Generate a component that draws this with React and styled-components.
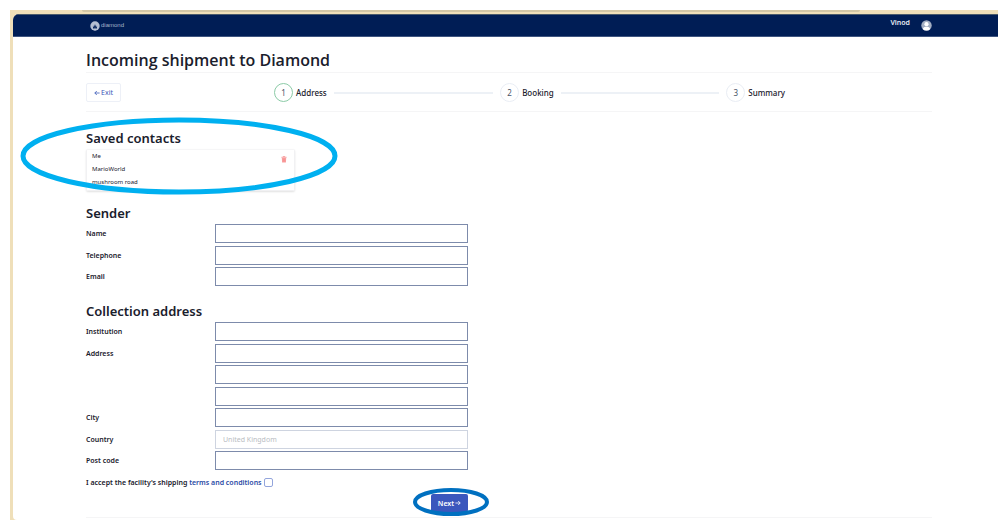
import React from "react";
import styled, { createGlobalStyle } from "styled-components";

const GlobalStyle = createGlobalStyle`
  * { box-sizing: border-box; }
  body {
    margin: 0;
    padding: 10px 7px 11px 10px;
    background: #fff;
    color: #1a202c;
    font-family: "Noto Sans", "Open Sans", sans-serif;
    font-size: 7px;
    line-height: 13px;
  }
  button, input { font: inherit; }
`;

const Desktop = styled.div`
  background: #efdfb9;
  padding: 0 0 0 3px;
`;

const BackdropEdge = styled.div`
  height: 2px;
  margin: 0 138px 2px 69px;
  background: #d3c7a6;
  border-radius: 0 0 2px 2px;
`;

const Window = styled.div`
  background: #fff;
  border-radius: 6px 0 0 4px;
  overflow: hidden;
`;

const TopBar = styled.header`
  display: flex;
  align-items: center;
  height: 23px;
  padding: 0 66px 0 77px;
  background: #001d55;
  border-top: 1px solid #4b5b6c;
  border-bottom: 1px solid #3f5580;
`;

const Brand = styled.a`
  display: flex;
  align-items: center;
  gap: 1px;
  margin-right: auto;
  color: #a9b4cb;
  font-family: "Liberation Sans", Arial, sans-serif;
  font-size: 6px;
  text-decoration: none;
`;

const User = styled.span`
  align-self: flex-start;
  line-height: 15px;
  font-weight: 600;
  color: #e8ecf4;
`;

const Avatar = styled.svg`
  display: block;
  width: 11px;
  height: 11px;
  margin-left: 11px;
`;

const Page = styled.main`
  margin: 0 66px 0 73px;
  padding: 12px 0 2px;
`;

const Title = styled.h1`
  margin: 0;
  padding-bottom: 1px;
  border-bottom: 1px solid #f5f5f6;
  font-family: "Open Sans", "Noto Sans", sans-serif;
  font-size: 16px;
  line-height: 22px;
  font-weight: 600;
`;

const Progress = styled.nav`
  display: flex;
  align-items: center;
  padding: 10px 0 9px;
  border-bottom: 1px solid #f5f5f6;
`;

const ExitButton = styled.button`
  display: flex;
  align-items: center;
  justify-content: center;
  gap: 1px;
  width: 35px;
  height: 19px;
  padding: 0;
  border: 1px solid #edf0f7;
  border-radius: 2px;
  background: #fff;
  color: #3b58b8;
`;

const Steps = styled.ol`
  flex: 1;
  display: flex;
  gap: 7px;
  margin: 0 147px 0 153px;
  padding: 0;
  list-style: none;
`;

const Step = styled.li`
  flex: ${(p) => (p.$last ? "0 0 57px" : "1")};
  display: flex;
  align-items: center;
  gap: 3px;
  font-size: 8px;
  font-weight: 500;
`;

const StepNumber = styled.span`
  display: grid;
  place-items: center;
  flex: none;
  width: 19px;
  height: 19px;
  border: 1px solid ${(p) => (p.$active ? "#8ccba7" : "#e9edf4")};
  border-radius: 50%;
  font-weight: 400;
  color: #4a5568;
`;

const StepLine = styled.span`
  flex: 1;
  height: 2px;
  margin-left: 4px;
  background: #edf1f6;
`;

const Section = styled.section`
  position: relative;
  margin-top: ${(p) => p.$space}px;
`;

const Heading = styled.h2`
  margin: 0 0 2px;
  font-size: 13px;
  line-height: 18px;
  font-weight: 600;
`;

const ContactCard = styled.div`
  display: flex;
  justify-content: space-between;
  align-items: flex-start;
  width: 209px;
  height: 42px;
  padding: 0 7px 0 5px;
  border: 1px solid #f1f1f3;
  border-top-color: #f6f6f7;
  border-radius: 2px;
  box-shadow: 0 1px 2px #0000001f;
  font-size: 6px;
  p { margin: 0; }
`;

const DeleteButton = styled.button`
  margin-top: 6px;
  padding: 0;
  border: 0;
  background: none;
  svg { display: block; }
`;

const Fields = styled.div`
  display: grid;
  align-content: space-between;
  width: 382px;
  min-height: ${(p) => p.$height}px;
`;

const FieldRow = styled.div`
  display: grid;
  grid-template-columns: 129px 1fr;
  align-items: center;
  label { font-weight: 600; }
`;

const TextInput = styled.input`
  grid-column: 2;
  width: 100%;
  height: 19px;
  padding: 0 7px;
  border: 1px solid #7d8bab;
  border-radius: 0;
  background: #fff;
  color: #1a202c;
  &:disabled { border-color: #ced4e0; color: #b9bcc2; }
`;

const Terms = styled.div`
  display: flex;
  align-items: center;
  gap: 2px;
  height: 11px;
  margin-top: 7px;
  font-weight: 600;
  a { color: #2a4ba5; text-decoration: none; }
`;

const Checkbox = styled.input`
  appearance: none;
  width: 9px;
  height: 9px;
  margin: 0;
  border: 1px solid #93a5dc;
  border-radius: 2px;
  background: #fff;
`;

const Actions = styled.div`
  display: flex;
  justify-content: flex-end;
  width: 382px;
  margin-top: 6px;
`;

const NextWrap = styled.div`
  position: relative;
`;

const NextButton = styled.button`
  display: flex;
  align-items: center;
  justify-content: center;
  gap: 1px;
  width: 37px;
  height: 18px;
  padding: 0;
  border: 0;
  border-radius: 2px;
  background: #3b57bd;
  color: #fff;
  font-weight: 600;
`;

const Divider = styled.hr`
  margin: 5px 0 0;
  border: 0;
  border-top: 1px solid #f5f5f6;
`;

const Ring = styled.svg`
  position: absolute;
  left: ${(p) => p.$left}px;
  top: ${(p) => p.$top}px;
  pointer-events: none;
  overflow: visible;
`;

function Arrow({ back }) {
  return (
    <svg width="6" height="6" viewBox="0 0 6 6" fill="none" stroke="currentColor" strokeWidth="0.8" aria-hidden="true">
      <path d={back ? "M5.6 3H0.8M2.8 1L0.8 3l2 2" : "M0.4 3h4.8M3.2 1l2 2-2 2"} />
    </svg>
  );
}

function Field({ label, id, ...rest }) {
  return (
    <FieldRow>
      {label && <label htmlFor={id}>{label}</label>}
      <TextInput id={id} {...rest} />
    </FieldRow>
  );
}

const steps = ["Address", "Booking", "Summary"];

export default function App() {
  return (
    <>
      <GlobalStyle />
      <Desktop>
        <BackdropEdge />
        <Window>
          <TopBar>
            <Brand href="#">
              <svg width="10" height="10" viewBox="0 0 10 10" aria-hidden="true">
                <circle cx="5" cy="5" r="4.7" fill="#b4bed2" />
                <path d="M5 8.6C3.6 8 2.8 7 2.9 5.2L3.8 6 4 3.6l.7 2L5 2.6l.3 3L6 3.6 6.2 6l.9-.8C7.2 7 6.4 8 5 8.6Z" fill="#0d2a62" />
                <path d="M5 9.4C4.2 8.6 4.1 7.8 5 6.4 5.9 7.8 5.8 8.6 5 9.4Z" fill="#dfe4ee" />
              </svg>
              diamond
            </Brand>
            <User>Vinod</User>
            <Avatar viewBox="0 0 11 11" aria-hidden="true">
              <circle cx="5.5" cy="5.5" r="5.2" fill="#a3aec2" />
              <circle cx="5.5" cy="4.2" r="2.1" fill="#fff" />
              <path d="M1.8 9C2.2 7.3 3.6 6.8 5.5 6.8S8.8 7.3 9.2 9A5.2 5.2 0 0 1 1.8 9Z" fill="#fff" />
            </Avatar>
          </TopBar>
          <Page>
            <Title>Incoming shipment to Diamond</Title>
            <Progress>
              <ExitButton type="button"><Arrow back />Exit</ExitButton>
              <Steps>
                {steps.map((name, i) => (
                  <Step key={name} $last={i === steps.length - 1}>
                    <StepNumber $active={i === 0}>{i + 1}</StepNumber>
                    {name}
                    {i < steps.length - 1 && <StepLine />}
                  </Step>
                ))}
              </Steps>
            </Progress>
            <Section $space={17}>
              <Heading>Saved contacts</Heading>
              <ContactCard>
                <div>
                  <p>Me</p>
                  <p>MarioWorld</p>
                  <p>mushroom road</p>
                </div>
                <DeleteButton type="button" aria-label="Delete contact">
                  <svg width="6" height="7" viewBox="0 0 6 7" aria-hidden="true">
                    <path d="M0.4 1.3h5.2M2.2 1V.5h1.6V1" stroke="#f79a9a" strokeWidth="0.9" fill="none" />
                    <path d="M0.8 1.9h4.4L4.9 6.6H1.1Z" fill="#f9a0a0" />
                    <path d="M2.3 2.6v3.2M3.7 2.6v3.2" stroke="#f48484" strokeWidth="0.5" />
                  </svg>
                </DeleteButton>
              </ContactCard>
              <Ring $left={-67} $top={-12} width="320" height="78" aria-hidden="true">
                <ellipse cx="160" cy="39" rx="156" ry="36" fill="none" stroke="#00b0f0" strokeWidth="5" />
              </Ring>
            </Section>
            <form onSubmit={(e) => e.preventDefault()}>
              <Section $space={13}>
                <Heading>Sender</Heading>
                <Fields $height={62}>
                  <Field label="Name" id="name" />
                  <Field label="Telephone" id="telephone" />
                  <Field label="Email" id="email" />
                </Fields>
              </Section>
              <Section $space={16}>
                <Heading>Collection address</Heading>
                <Fields $height={148}>
                  <Field label="Institution" id="institution" />
                  <Field label="Address" id="address1" />
                  <Field id="address2" aria-label="Address line 2" />
                  <Field id="address3" aria-label="Address line 3" />
                  <Field label="City" id="city" />
                  <Field label="Country" id="country" defaultValue="United Kingdom" disabled />
                  <Field label="Post code" id="postcode" />
                </Fields>
              </Section>
              <Terms>
                <label htmlFor="terms">
                  I accept the facility's shipping <a href="#terms">terms and conditions</a>
                </label>
                <Checkbox id="terms" type="checkbox" />
              </Terms>
              <Actions>
                <NextWrap>
                  <NextButton type="submit">Next<Arrow /></NextButton>
                  <Ring $left={-19} $top={-6} width="78" height="28" aria-hidden="true">
                    <ellipse cx="39" cy="14" rx="36" ry="12" fill="none" stroke="#0070c0" strokeWidth="4" />
                  </Ring>
                </NextWrap>
              </Actions>
            </form>
            <Divider />
          </Page>
        </Window>
      </Desktop>
    </>
  );
}
